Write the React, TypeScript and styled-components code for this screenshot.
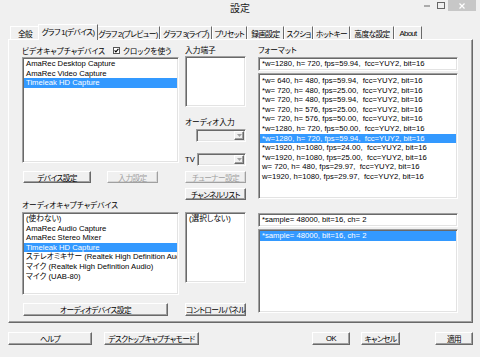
import React from 'react';
import styled, { createGlobalStyle, css } from 'styled-components';

const GlobalStyle = createGlobalStyle`
  html, body {
    margin: 0;
    padding: 0;
    background: #f0f0f0;
  }
  body {
    font-family: "Liberation Sans", "Noto Sans CJK JP", sans-serif;
    font-size: 7.7px;
    font-feature-settings: "palt" 1;
    color: #000;
  }
`;

const sunken = css`
  box-sizing: border-box;
  border: 1px solid;
  border-color: #a0a0a0 #fff #fff #a0a0a0;
  box-shadow: inset 1px 1px 0 #696969, inset -1px -1px 0 #e3e3e3;
  padding: 1px;
`;

const raised = css`
  box-sizing: border-box;
  border: 1px solid;
  border-color: #fff #696969 #696969 #fff;
  box-shadow: inset -1px -1px 0 #a0a0a0;
`;

const Window = styled.div`
  width: 480px;
  height: 357px;
  display: flex;
  flex-direction: column;
  background: #f0f0f0;
  overflow: hidden;
`;

const TitleBar = styled.div`
  height: 20px;
  display: grid;
  grid-template-columns: 1fr auto 1fr;
  align-items: start;
`;

const Title = styled.div`
  grid-column: 2;
  font-size: 10px;
  line-height: 17px;
  color: #1a1a1a;
`;

const Controls = styled.div`
  grid-column: 3;
  justify-self: end;
  display: flex;
  margin-right: 4px;
`;

const CtrlButton = styled.div<{ $close?: boolean }>`
  width: ${(p) => (p.$close ? 28 : 14)}px;
  height: 11px;
  display: flex;
  align-items: center;
  justify-content: center;
  background: ${(p) => (p.$close ? '#c7c7c7' : 'transparent')};
`;

const TabStrip = styled.div`
  height: 19px;
  display: flex;
  align-items: flex-end;
  padding-left: 10px;
  position: relative;
  z-index: 1;
`;

const Tab = styled.div<{ $w: number; $active?: boolean }>`
  width: ${(p) => p.$w}px;
  height: ${(p) => (p.$active ? 16 : 13)}px;
  margin: ${(p) => (p.$active ? '0 -2px -1px' : '0')};
  box-sizing: border-box;
  border-top: 1px solid #fff;
  border-left: 1px solid #fff;
  border-right: 1px solid #696969;
  background: #f0f0f0;
  display: flex;
  align-items: center;
  justify-content: center;
  padding-bottom: ${(p) => (p.$active ? 2 : 0)}px;
  letter-spacing: -0.6px;
  white-space: nowrap;
  position: relative;
  z-index: ${(p) => (p.$active ? 1 : 0)};
`;

const Panel = styled.div`
  margin: 0 7px 0 8px;
  height: 284px;
  box-sizing: border-box;
  border-top: 1px solid #fff;
  border-left: 1px solid #fff;
  border-right: 1px solid #696969;
  border-bottom: 1px solid #696969;
  box-shadow: inset -1px -1px 0 #a0a0a0;
  padding: 5px 0 0 13px;
  display: flex;
`;

const Column = styled.div<{ $w: number; $ml?: number }>`
  width: ${(p) => p.$w}px;
  margin-left: ${(p) => p.$ml ?? 0}px;
  display: flex;
  flex-direction: column;
`;

const Label = styled.div<{ $mt?: number }>`
  height: 11px;
  line-height: 11px;
  margin-top: ${(p) => p.$mt ?? 0}px;
  white-space: nowrap;
`;

const HeaderRow = styled.div`
  height: 11px;
  display: grid;
  grid-template-columns: 91px auto;
  align-items: center;
  white-space: nowrap;
`;

const CheckWrap = styled.label`
  display: flex;
  align-items: center;
  gap: 3px;
`;

const ListBox = styled.div<{ $h: number; $mt?: number; $pt?: number }>`
  ${sunken};
  width: 100%;
  height: ${(p) => p.$h}px;
  margin-top: ${(p) => p.$mt ?? 0}px;
  padding-top: ${(p) => (p.$pt ?? 0) + 1}px;
  background: #fff;
  overflow: hidden;
`;

const Row = styled.div<{ $sel?: boolean }>`
  height: 9.6px;
  line-height: 9.6px;
  padding-left: 2px;
  white-space: pre;
  overflow: hidden;
  background: ${(p) => (p.$sel ? '#3399ff' : 'transparent')};
  color: ${(p) => (p.$sel ? '#fff' : '#000')};
`;

const Edit = styled.div<{ $mt?: number }>`
  ${sunken};
  height: 14px;
  margin-top: ${(p) => p.$mt ?? 0}px;
  padding-left: 3px;
  line-height: 10px;
  background: #fff;
  white-space: pre;
`;

const Combo = styled.div<{ $w: number; $mt?: number; $ml?: number }>`
  ${sunken};
  width: ${(p) => p.$w}px;
  height: 13px;
  margin-top: ${(p) => p.$mt ?? 0}px;
  margin-left: ${(p) => p.$ml ?? 0}px;
  background: #f0f0f0;
  display: flex;
  justify-content: flex-end;
`;

const ComboArrow = styled.div`
  ${raised};
  width: 10px;
  height: 100%;
  display: flex;
  align-items: center;
  justify-content: center;
`;

const TvRow = styled.div`
  height: 13px;
  margin-top: 11px;
  display: flex;
  align-items: center;
  justify-content: space-between;
`;

const ButtonRow = styled.div<{ $mt?: number; $gap?: number }>`
  display: flex;
  margin-top: ${(p) => p.$mt ?? 0}px;
  gap: ${(p) => p.$gap ?? 0}px;
  padding-left: 1px;
`;

const Button = styled.button<{ $w: number; $h?: number; $mt?: number; $ml?: number }>`
  ${raised};
  width: ${(p) => p.$w}px;
  height: ${(p) => p.$h ?? 13}px;
  margin: ${(p) => p.$mt ?? 0}px 0 0 ${(p) => p.$ml ?? 0}px;
  padding: 0;
  font-family: inherit;
  font-size: 7.7px;
  font-feature-settings: "palt" 1;
  letter-spacing: -0.6px;
  color: #000;
  background: #f0f0f0;
  white-space: nowrap;
  overflow: visible;
  display: flex;
  align-items: center;
  justify-content: center;
  flex-shrink: 0;

  &:disabled {
    color: #a0a0a0;
    border-color: #fff #a0a0a0 #a0a0a0 #fff;
    box-shadow: inset -1px -1px 0 #d8d8d8;
  }
`;

const Footer = styled.div`
  display: flex;
  padding: 9px 7px 0 8px;
`;

const Spacer = styled.div`
  flex: 1;
`;

const tabs = [
  { label: '全般', w: 30 },
  { label: 'グラフ 1(デバイス)', w: 60, active: true },
  { label: 'グラフ 2(プレビュー)', w: 64 },
  { label: 'グラフ 3(ライブ)', w: 52 },
  { label: 'プリセット', w: 35 },
  { label: '録画設定', w: 37 },
  { label: 'スクショ', w: 29 },
  { label: 'ホットキー', w: 37 },
  { label: '高度な設定', w: 44 },
  { label: 'About', w: 28 },
];

const videoDevices = ['AmaRec Desktop Capture', 'AmaRec Video Capture', 'Timeleak HD Capture'];

const audioDevices = [
  '(使わない)',
  'AmaRec Audio Capture',
  'AmaRec Stereo Mixer',
  'Timeleak HD Capture',
  'ステレオミキサー (Realtek High Definition Audio)',
  'マイク (Realtek High Definition Audio)',
  'マイク (UAB-80)',
];

const formats = [
  '*w= 640, h= 480, fps=59.94,  fcc=YUY2, bit=16',
  '*w= 720, h= 480, fps=25.00,  fcc=YUY2, bit=16',
  '*w= 720, h= 480, fps=59.94,  fcc=YUY2, bit=16',
  '*w= 720, h= 576, fps=25.00,  fcc=YUY2, bit=16',
  '*w= 720, h= 576, fps=50.00,  fcc=YUY2, bit=16',
  '*w=1280, h= 720, fps=50.00,  fcc=YUY2, bit=16',
  '*w=1280, h= 720, fps=59.94,  fcc=YUY2, bit=16',
  '*w=1920, h=1080, fps=24.00,  fcc=YUY2, bit=16',
  '*w=1920, h=1080, fps=25.00,  fcc=YUY2, bit=16',
  'w= 720, h= 480, fps=29.97,  fcc=YUY2, bit=16',
  'w=1920, h=1080, fps=29.97,  fcc=YUY2, bit=16',
];

function DropArrow() {
  return (
    <svg width="5" height="3" viewBox="0 0 5 3">
      <path d="M0 0h5L2.5 3z" fill="#a0a0a0" />
    </svg>
  );
}

function ComboBox({ w, mt, ml }: { w: number; mt?: number; ml?: number }) {
  return (
    <Combo $w={w} $mt={mt} $ml={ml}>
      <ComboArrow>
        <DropArrow />
      </ComboArrow>
    </Combo>
  );
}

function App() {
  return (
    <>
      <GlobalStyle />
      <Window>
        <TitleBar>
          <Title>設定</Title>
          <Controls>
            <CtrlButton>
              <svg width="6" height="2" viewBox="0 0 6 2">
                <rect x="0" y="0.5" width="6" height="1" fill="#666" />
              </svg>
            </CtrlButton>
            <CtrlButton>
              <svg width="8" height="7" viewBox="0 0 8 7">
                <rect x="0.5" y="0.5" width="7" height="6" fill="none" stroke="#666" />
              </svg>
            </CtrlButton>
            <CtrlButton $close>
              <svg width="6" height="6" viewBox="0 0 6 6">
                <path d="M0.5 0.5l5 5M5.5 0.5l-5 5" stroke="#fff" strokeWidth="1.2" />
              </svg>
            </CtrlButton>
          </Controls>
        </TitleBar>

        <TabStrip>
          {tabs.map((t) => (
            <Tab key={t.label} $w={t.w} $active={t.active}>
              {t.label}
            </Tab>
          ))}
        </TabStrip>

        <Panel>
          <Column $w={157}>
            <HeaderRow>
              <span>ビデオキャプチャデバイス</span>
              <CheckWrap>
                <svg width="7" height="7" viewBox="0 0 7 7">
                  <rect x="0.5" y="0.5" width="6" height="6" fill="#fff" stroke="#555" />
                  <path d="M1.6 3.4l1.3 1.4 2.5-3" fill="none" stroke="#000" strokeWidth="1.1" />
                </svg>
                クロックを使う
              </CheckWrap>
            </HeaderRow>
            <ListBox $h={106} $mt={1}>
              {videoDevices.map((d, i) => (
                <Row key={d} $sel={i === 2}>
                  {d}
                </Row>
              ))}
            </ListBox>
            <ButtonRow $mt={8} $gap={16}>
              <Button $w={68} $h={12}>デバイス設定</Button>
              <Button $w={51} $h={12} disabled>
                入力設定
              </Button>
            </ButtonRow>
            <Label $mt={17}>オーディオキャプチャデバイス</Label>
            <ListBox $h={83} $mt={1}>
              {audioDevices.map((d, i) => (
                <Row key={d} $sel={i === 3}>
                  {d}
                </Row>
              ))}
            </ListBox>
            <ButtonRow $mt={8}>
              <Button $w={145}>オーディオデバイス設定</Button>
            </ButtonRow>
          </Column>

          <Column $w={61} $ml={6}>
            <Label>入力端子</Label>
            <ListBox $h={51} />
            <Label $mt={10}>オーディオ入力</Label>
            <ComboBox w={50} mt={1} ml={11} />
            <TvRow>
              <span>TV</span>
              <ComboBox w={49} />
            </TvRow>
            <Button $w={61} $h={12} $mt={5} disabled>
              チューナー設定
            </Button>
            <Button $w={61} $h={12} $mt={5}>
              チャンネルリスト
            </Button>
            <ListBox $h={71} $mt={12}>
              <Row>(選択しない)</Row>
            </ListBox>
            <Button $w={61} $mt={20}>
              コントロールパネル
            </Button>
          </Column>

          <Column $w={200} $ml={12}>
            <Label>フォーマット</Label>
            <Edit $mt={1}>{formats[6]}</Edit>
            <ListBox $h={126} $mt={2} $pt={1}>
              {formats.map((f, i) => (
                <Row key={f} $sel={i === 6}>
                  {f}
                </Row>
              ))}
            </ListBox>
            <Edit $mt={14}>*sample= 48000, bit=16, ch= 2</Edit>
            <ListBox $h={84} $mt={2}>
              <Row $sel>*sample= 48000, bit=16, ch= 2</Row>
            </ListBox>
          </Column>
        </Panel>

        <Footer>
          <Button $w={84}>ヘルプ</Button>
          <Button $w={95} $ml={12}>
            デスクトップキャプチャモード
          </Button>
          <Spacer />
          <Button $w={38}>OK</Button>
          <Button $w={39} $ml={11}>
            キャンセル
          </Button>
          <Button $w={38} $ml={35}>
            適用
          </Button>
        </Footer>
      </Window>
    </>
  );
}

export default App;
